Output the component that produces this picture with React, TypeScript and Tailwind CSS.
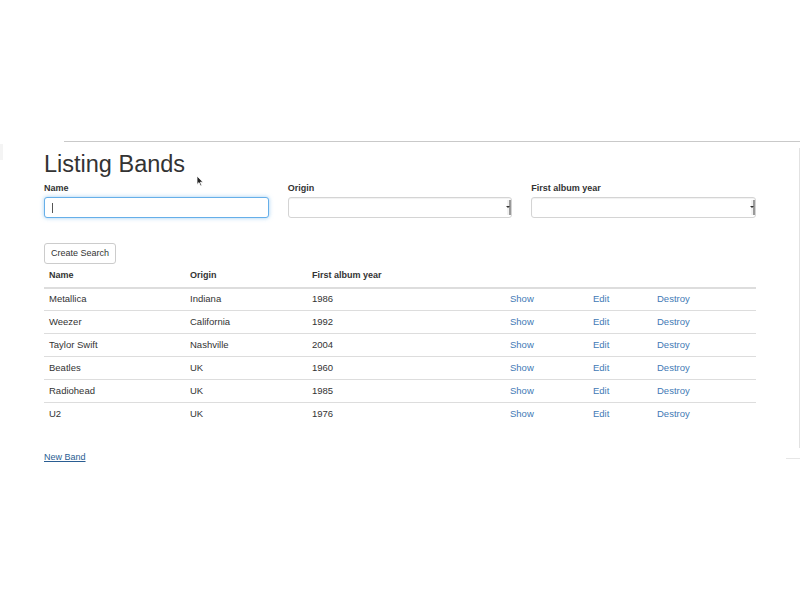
const bands = [
  { name: "Metallica", origin: "Indiana", year: "1986" },
  { name: "Weezer", origin: "California", year: "1992" },
  { name: "Taylor Swift", origin: "Nashville", year: "2004" },
  { name: "Beatles", origin: "UK", year: "1960" },
  { name: "Radiohead", origin: "UK", year: "1985" },
  { name: "U2", origin: "UK", year: "1976" },
];

const SelectBox = () => (
  <div className="relative h-[21px] rounded-[3px] border border-[#d4d4d4] bg-white shadow-[inset_0_1px_1px_rgba(0,0,0,0.06)]">
    <div className="absolute right-0 top-[2px] bottom-[2px] w-[4px] border-r-2 border-[#9a9a9a] bg-[#f2f2f2] flex items-center justify-center">
      <div className="w-0 h-0 border-l-[2px] border-r-[2px] border-t-[2px] border-l-transparent border-r-transparent border-t-[#333]" />
    </div>
  </div>
);

export default function App() {
  return (
    <div className="relative w-[800px] h-[600px] bg-white pt-[141px] font-['Liberation_Sans',Arial,sans-serif] text-[#333]">
      {/* window edge artefacts */}
      <div className="ml-[64px] border-t border-[#c9c9c9]" />
      <div className="absolute right-0 top-[148px] h-[300px] w-px bg-[#e2e2e2]" />
      <div className="absolute right-0 top-[458px] w-[14px] h-px bg-[#e6e6e6]" />
      <div className="absolute left-0 top-[144px] h-[16px] w-[3px] bg-[#f4f4f4]" />

      {/* mouse pointer */}
      <svg className="absolute left-[196px] top-[175px]" width="8" height="12" viewBox="0 0 8 12">
        <path d="M1 1 L1 9.5 L3 7.6 L4.6 11 L5.8 10.4 L4.3 7.2 L7 7.2 Z" fill="#222" stroke="#fff" strokeWidth="0.8" />
      </svg>

      <div className="px-[44px]">
        <h1 className="mt-[11px] text-[23.5px] leading-none">Listing Bands</h1>

        <div className="mt-[5px] grid grid-cols-3 gap-x-[19px]">
          <div>
            <div className="text-[9px] leading-[12px] font-bold">Name</div>
            <div className="mt-[3px] relative h-[21px] rounded-[3px] border border-[#66afe9] bg-white shadow-[0_0_4px_rgba(102,175,233,0.6)]">
              <div className="absolute left-[7px] top-[5px] h-[10px] w-px bg-[#555]" />
            </div>
          </div>
          <div>
            <div className="text-[9px] leading-[12px] font-bold">Origin</div>
            <div className="mt-[3px]">
              <SelectBox />
            </div>
          </div>
          <div>
            <div className="text-[9px] leading-[12px] font-bold">First album year</div>
            <div className="mt-[3px]">
              <SelectBox />
            </div>
          </div>
        </div>

        <button className="mt-[25px] h-[21px] px-[6px] pt-px rounded-[3px] border border-[#ccc] bg-white text-[9px] text-[#333]">
          Create Search
        </button>

        <table className="mt-px w-[712px] table-fixed border-collapse text-[9.5px]">
          <colgroup>
            <col className="w-[141px]" />
            <col className="w-[122px]" />
            <col className="w-[198px]" />
            <col className="w-[83px]" />
            <col className="w-[64px]" />
            <col />
          </colgroup>
          <thead>
            <tr className="h-[23px] border-b-2 border-[#dddddd] text-left">
              <th className="px-[5px] font-bold text-[9px]">Name</th>
              <th className="px-[5px] font-bold text-[9px]">Origin</th>
              <th className="px-[5px] font-bold text-[9px]">First album year</th>
              <th />
              <th />
              <th />
            </tr>
          </thead>
          <tbody>
            {bands.map((b, i) => (
              <tr key={b.name} className={`h-[23px] ${i > 0 ? "border-t border-[#dddddd]" : ""}`}>
                <td className="px-[5px]">{b.name}</td>
                <td className="px-[5px]">{b.origin}</td>
                <td className="px-[5px]">{b.year}</td>
                <td className="px-[5px] text-[#3f7ab5]">Show</td>
                <td className="px-[5px] text-[#3f7ab5]">Edit</td>
                <td className="px-[5px] text-[#3f7ab5]">Destroy</td>
              </tr>
            ))}
          </tbody>
        </table>

        <div className="mt-[25px] text-[9px] leading-[12px]">
          <span className="text-[#2a5d92] underline">New Band</span>
        </div>
      </div>
    </div>
  );
}
